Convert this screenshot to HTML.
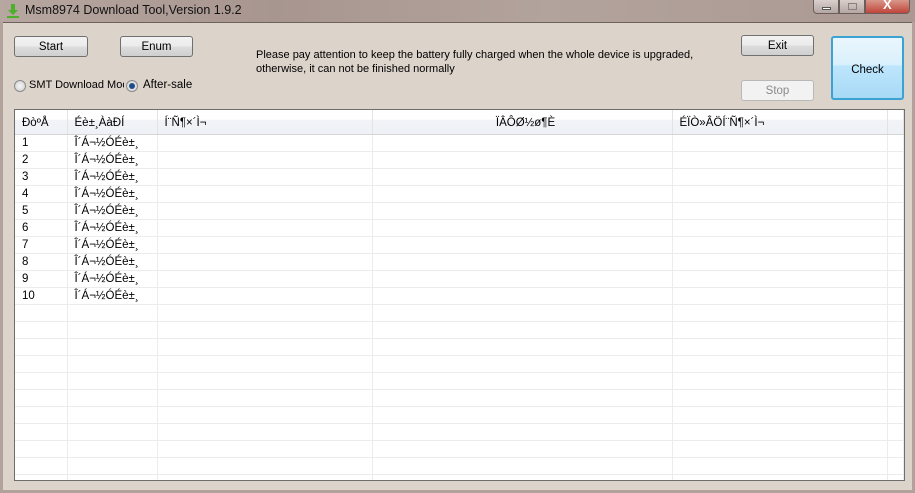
<!DOCTYPE html>
<html><head><meta charset="utf-8"><style>
*{margin:0;padding:0;box-sizing:border-box}
body{width:915px;height:493px;overflow:hidden;background:#b3a29c;font-family:"Liberation Sans",sans-serif;font-size:11.5px;color:#000;position:relative}
.title{position:absolute;left:0;top:0;width:915px;height:22px;background:linear-gradient(90deg,#b7a7a1 0%,#a8958f 30%,#b3a39d 60%,#ab9892 100%)}
.title span{position:absolute;left:25px;top:3px;font-size:12.5px;color:#111}
.client{position:absolute;left:3px;top:22px;width:909px;height:468px;background:#dcd3cb;border-top:1px solid #6f625c}
.btn{position:absolute;border:1px solid #707070;border-radius:3px;background:linear-gradient(#f2f2f2 0%,#ebebeb 50%,#dddddd 51%,#cfcfcf 100%);text-align:center;line-height:20px;font-size:11.5px}
.abs{position:absolute}
.radio{position:absolute;width:12px;height:12px;border-radius:50%;border:1px solid #8a8a8a;background:radial-gradient(#f4f4f4,#d0d0d0)}
table{position:absolute;left:0;top:0;border-collapse:collapse;background:#fff;table-layout:fixed}
.tbl{position:absolute;left:14px;top:109px;width:891px;height:372px;background:#fff;border:1px solid #6d6d6d;overflow:hidden}
td,th{height:17px;border-right:1px solid #ececec;border-bottom:1px solid #ececec;font-weight:normal;text-align:left;padding-left:7px;white-space:nowrap;overflow:hidden;font-size:11.5px;padding-top:1px}
th{height:24px;padding-top:2px;background:linear-gradient(#fff 0%,#fff 40%,#f1f3f7 41%,#eef1f5 100%);border-bottom:1px solid #d5d5d5;border-right:1px solid #e3e3e3}
th.c{text-align:center}
.winbtn{position:absolute;top:0;height:14px;border:1px solid #6b5e5a;border-top:none}
</style></head><body>
<div class="title">
<svg class="abs" style="left:6px;top:3px" width="14" height="16" viewBox="0 0 14 16"><path d="M5 1h4v6h3l-5 5-5-5h3z" fill="#4cb02a"/><rect x="1" y="13" width="12" height="2" fill="#4cb02a"/></svg>
<span>Msm8974 Download Tool,Version 1.9.2</span>
<div class="winbtn" style="left:813px;width:26px;border-radius:0 0 0 4px;background:linear-gradient(#d9cfcc,#b5a7a3)"><div style="position:absolute;left:8px;top:7px;width:9px;height:3px;background:#fff;border:1px solid #555"></div></div>
<div class="winbtn" style="left:839px;width:26px;background:linear-gradient(#d9cfcc,#b5a7a3)"><div style="position:absolute;left:8px;top:3px;width:9px;height:7px;border:1px solid #8a7f7c"></div></div>
<div class="winbtn" style="left:865px;width:45px;border-radius:0 0 4px 0;background:linear-gradient(#d8988a,#c0443a)"><div style="position:absolute;left:17px;top:-3px;color:#fff;font-weight:bold;font-size:13px">X</div></div>
</div>
<div class="client"></div>
<div class="btn" style="left:14px;top:36px;width:74px;height:21px">Start</div>
<div class="btn" style="left:120px;top:36px;width:73px;height:21px">Enum</div>
<div class="abs" style="left:256px;top:48px;line-height:14px;font-size:11px">Please pay attention to keep the battery fully charged when the whole device is upgraded,<br>otherwise, it can not be finished normally</div>
<div class="btn" style="left:741px;top:35px;width:73px;height:21px">Exit</div>
<div class="btn" style="left:741px;top:80px;width:73px;height:21px;background:#f2f2f2;border-color:#b8b8b8;color:#8a8a8a">Stop</div>
<div class="btn" style="left:831px;top:36px;width:73px;height:64px;line-height:64px;border:2px solid #3aa3d4;background:linear-gradient(#eaf6fd 0%,#d9f0fc 45%,#bee6fd 46%,#a7d9f5 100%)">Check</div>
<div class="radio" style="left:14px;top:80px"></div>
<div class="abs" style="left:29px;top:79px;width:95px;overflow:hidden;white-space:nowrap;font-size:11px">SMT Download Mode</div>
<div class="radio" style="left:126px;top:80px"><div style="position:absolute;left:2px;top:2px;width:6px;height:6px;border-radius:50%;background:#1f4f8a"></div></div>
<div class="abs" style="left:143px;top:79px">After-sale</div>
<div class="tbl">
<table style="width:889px">
<colgroup><col style="width:52px"><col style="width:90px"><col style="width:215px"><col style="width:300px"><col style="width:215px"><col></colgroup>
<tr><th>ÐòºÅ</th><th>Éè±¸ÀàÐÍ</th><th>Í¨Ñ¶×´Ì¬</th><th class="c">ÏÂÔØ½ø¶È</th><th>ÉÏÒ»ÂÖÍ¨Ñ¶×´Ì¬</th><th></th></tr>
<tr><td>1</td><td>Î´Á¬½ÓÉè±¸</td><td></td><td></td><td></td><td></td></tr>
<tr><td>2</td><td>Î´Á¬½ÓÉè±¸</td><td></td><td></td><td></td><td></td></tr>
<tr><td>3</td><td>Î´Á¬½ÓÉè±¸</td><td></td><td></td><td></td><td></td></tr>
<tr><td>4</td><td>Î´Á¬½ÓÉè±¸</td><td></td><td></td><td></td><td></td></tr>
<tr><td>5</td><td>Î´Á¬½ÓÉè±¸</td><td></td><td></td><td></td><td></td></tr>
<tr><td>6</td><td>Î´Á¬½ÓÉè±¸</td><td></td><td></td><td></td><td></td></tr>
<tr><td>7</td><td>Î´Á¬½ÓÉè±¸</td><td></td><td></td><td></td><td></td></tr>
<tr><td>8</td><td>Î´Á¬½ÓÉè±¸</td><td></td><td></td><td></td><td></td></tr>
<tr><td>9</td><td>Î´Á¬½ÓÉè±¸</td><td></td><td></td><td></td><td></td></tr>
<tr><td>10</td><td>Î´Á¬½ÓÉè±¸</td><td></td><td></td><td></td><td></td></tr>
<tr><td></td><td></td><td></td><td></td><td></td><td></td></tr>
<tr><td></td><td></td><td></td><td></td><td></td><td></td></tr>
<tr><td></td><td></td><td></td><td></td><td></td><td></td></tr>
<tr><td></td><td></td><td></td><td></td><td></td><td></td></tr>
<tr><td></td><td></td><td></td><td></td><td></td><td></td></tr>
<tr><td></td><td></td><td></td><td></td><td></td><td></td></tr>
<tr><td></td><td></td><td></td><td></td><td></td><td></td></tr>
<tr><td></td><td></td><td></td><td></td><td></td><td></td></tr>
<tr><td></td><td></td><td></td><td></td><td></td><td></td></tr>
<tr><td></td><td></td><td></td><td></td><td></td><td></td></tr>
<tr><td></td><td></td><td></td><td></td><td></td><td></td></tr>
</table>
</div>
</body></html>
